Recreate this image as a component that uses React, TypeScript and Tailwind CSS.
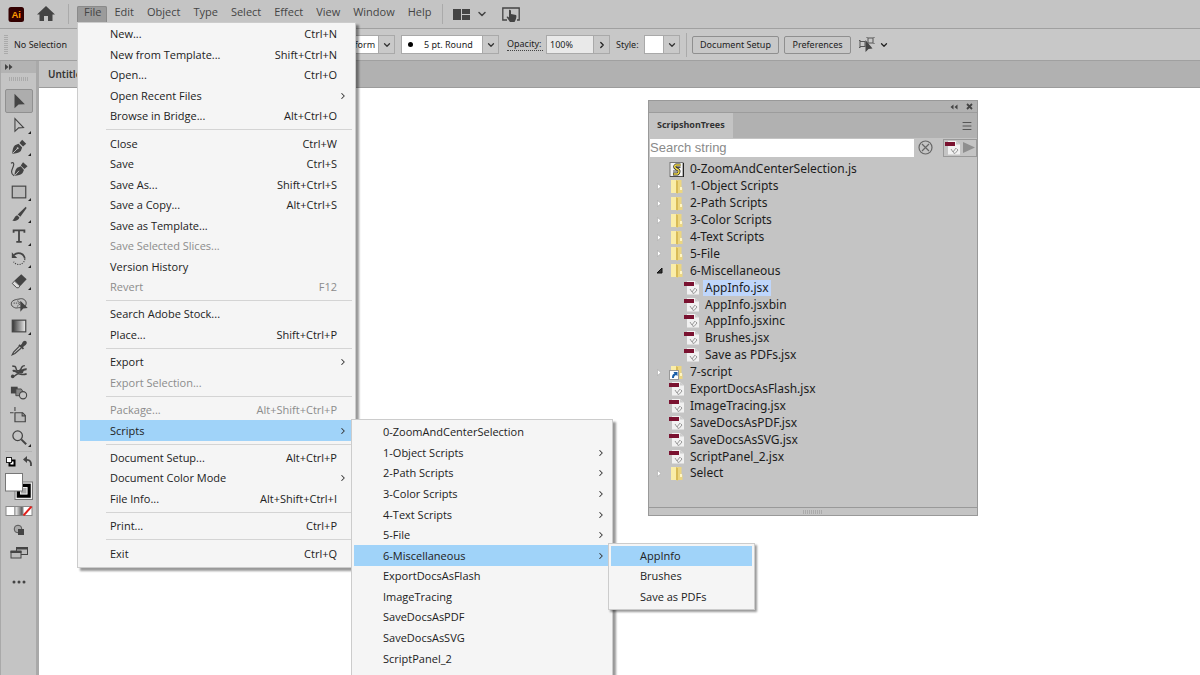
import React from 'react';
import { ChevronDown, ChevronRight, Menu as MenuIcon } from 'lucide-react';
import clsx from 'clsx';

interface MenuEntry {
  label: string;
  shortcut?: string;
  submenu?: boolean;
  disabled?: boolean;
  active?: boolean;
}

interface TreeNode {
  name: string;
  icon: 'folder' | 'shortcut' | 'jsx' | 'js';
  child?: boolean;
  open?: boolean;
  selected?: boolean;
}

const menuNames = ['File', 'Edit', 'Object', 'Type', 'Select', 'Effect', 'View', 'Window', 'Help'];

// null draws a separator
const fileMenu: (MenuEntry | null)[] = [
  { label: 'New...', shortcut: 'Ctrl+N' },
  { label: 'New from Template...', shortcut: 'Shift+Ctrl+N' },
  { label: 'Open...', shortcut: 'Ctrl+O' },
  { label: 'Open Recent Files', submenu: true },
  { label: 'Browse in Bridge...', shortcut: 'Alt+Ctrl+O' },
  null,
  { label: 'Close', shortcut: 'Ctrl+W' },
  { label: 'Save', shortcut: 'Ctrl+S' },
  { label: 'Save As...', shortcut: 'Shift+Ctrl+S' },
  { label: 'Save a Copy...', shortcut: 'Alt+Ctrl+S' },
  { label: 'Save as Template...' },
  { label: 'Save Selected Slices...', disabled: true },
  { label: 'Version History' },
  { label: 'Revert', shortcut: 'F12', disabled: true },
  null,
  { label: 'Search Adobe Stock...' },
  { label: 'Place...', shortcut: 'Shift+Ctrl+P' },
  null,
  { label: 'Export', submenu: true },
  { label: 'Export Selection...', disabled: true },
  null,
  { label: 'Package...', shortcut: 'Alt+Shift+Ctrl+P', disabled: true },
  { label: 'Scripts', submenu: true, active: true },
  null,
  { label: 'Document Setup...', shortcut: 'Alt+Ctrl+P' },
  { label: 'Document Color Mode', submenu: true },
  { label: 'File Info...', shortcut: 'Alt+Shift+Ctrl+I' },
  null,
  { label: 'Print...', shortcut: 'Ctrl+P' },
  null,
  { label: 'Exit', shortcut: 'Ctrl+Q' },
];

const scriptsMenu: MenuEntry[] = [
  { label: '0-ZoomAndCenterSelection' },
  { label: '1-Object Scripts', submenu: true },
  { label: '2-Path Scripts', submenu: true },
  { label: '3-Color Scripts', submenu: true },
  { label: '4-Text Scripts', submenu: true },
  { label: '5-File', submenu: true },
  { label: '6-Miscellaneous', submenu: true, active: true },
  { label: 'ExportDocsAsFlash' },
  { label: 'ImageTracing' },
  { label: 'SaveDocsAsPDF' },
  { label: 'SaveDocsAsSVG' },
  { label: 'ScriptPanel_2' },
];

const miscMenu: MenuEntry[] = [
  { label: 'AppInfo', active: true },
  { label: 'Brushes' },
  { label: 'Save as PDFs' },
];

const tree: TreeNode[] = [
  { name: '0-ZoomAndCenterSelection.js', icon: 'js' },
  { name: '1-Object Scripts', icon: 'folder' },
  { name: '2-Path Scripts', icon: 'folder' },
  { name: '3-Color Scripts', icon: 'folder' },
  { name: '4-Text Scripts', icon: 'folder' },
  { name: '5-File', icon: 'folder' },
  { name: '6-Miscellaneous', icon: 'folder', open: true },
  { name: 'AppInfo.jsx', icon: 'jsx', child: true, selected: true },
  { name: 'AppInfo.jsxbin', icon: 'jsx', child: true },
  { name: 'AppInfo.jsxinc', icon: 'jsx', child: true },
  { name: 'Brushes.jsx', icon: 'jsx', child: true },
  { name: 'Save as PDFs.jsx', icon: 'jsx', child: true },
  { name: '7-script', icon: 'shortcut' },
  { name: 'ExportDocsAsFlash.jsx', icon: 'jsx' },
  { name: 'ImageTracing.jsx', icon: 'jsx' },
  { name: 'SaveDocsAsPDF.jsx', icon: 'jsx' },
  { name: 'SaveDocsAsSVG.jsx', icon: 'jsx' },
  { name: 'ScriptPanel_2.jsx', icon: 'jsx' },
  { name: 'Select', icon: 'folder' },
];

const tools: { name: string; flyout?: boolean; art: React.ReactNode }[] = [
  { name: 'Selection', art: <path d="M5 2v16l4.500-4 7 -.5z" fill="#444" /> },
  {
    name: 'Direct Selection',
    flyout: true,
    art: <path d="M5.500 3v14l4-3.800 5.500-.4z" fill="none" stroke="#444" strokeWidth="1.200" />,
  },
  {
    name: 'Pen',
    flyout: true,
    art: (
      <>
        <path d="M2.500 17.500c0-4 1-7.500 3-9.500l4-1.500 4 4-1.500 4c-2 2-5.500 3-9.500 3z" fill="#444" />
        <path d="M10.500 5.500l3-3.500 4.500 4.500-3.500 3z" fill="#444" />
        <path d="M3 17l5-5" stroke="#c4c4c4" />
        <circle cx="8.500" cy="11.500" r="1.100" fill="#c4c4c4" />
      </>
    ),
  },
  {
    name: 'Curvature',
    art: (
      <>
        <path d="M5 17.500c0-4 1-7 3-9l4-1.500 3.500 4-1.500 3.500c-2 2-5 3-9 3z" fill="#444" />
        <path d="M12 6l2.500-3.500 5 4.500-3.500 3z" fill="#444" />
        <path d="M5.500 17l4.500-5" stroke="#c4c4c4" />
        <path d="M1 3.500c3-1.500 4 .5 2.500 4S0 15 4.500 17.500" fill="none" stroke="#444" strokeWidth="1.300" />
      </>
    ),
  },
  {
    name: 'Rectangle',
    flyout: true,
    art: <rect x="2.500" y="3.500" width="15" height="13" fill="#bbb" stroke="#444" strokeWidth="1.300" />,
  },
  {
    name: 'Paintbrush',
    flyout: true,
    art: (
      <>
        <path d="M17.500 2l1 1.200-7 9.800-3-2.500z" fill="#444" />
        <path d="M8 11.500l2.500 2.500c-1 3.500-4.500 4-8 3.500 2-1 2.500-5 5.500-6z" fill="#444" />
      </>
    ),
  },
  {
    name: 'Type',
    flyout: true,
    art: <path d="M4 6.500V3.800h12v2.700M10 4v12.500M7 16.500h6" fill="none" stroke="#444" strokeWidth="2" />,
  },
  {
    name: 'Rotate',
    flyout: true,
    art: (
      <>
        <path d="M4.500 5.500c4-4 11-2 12 4" fill="none" stroke="#444" strokeWidth="1.900" />
        <path d="M2 2.500v6.500h6z" fill="#444" />
        <path d="M16.500 10a6.800 6.800 0 0 1-12.500 3" fill="none" stroke="#444" strokeWidth="1.300" strokeDasharray="1.200 1.400" />
      </>
    ),
  },
  {
    name: 'Eraser',
    flyout: true,
    art: (
      <>
        <path d="M12.500 2.500l6 5.500-7 7.500-6.500-6z" fill="#444" />
        <path d="M5 10l-2.500 2.800 5 4.700h2l1.500-2z" fill="#ddd" stroke="#444" />
      </>
    ),
  },
  {
    name: 'Shape Builder',
    art: (
      <>
        <path d="M10 4.500c4-1.500 8 1 8 4.500s-2 5-6 5-5 1-7 0-4-2-3.500-5S6 5 10 4.500z" fill="#c0c0c0" stroke="#444" />
        <path d="M4 9h10M8 6.500c4 1 4 4 0 6" fill="none" stroke="#444" strokeDasharray="1.500 1" />
        <path d="M11.500 6.500v12l3.200-3.500 5-.5z" fill="#444" />
      </>
    ),
  },
  {
    name: 'Gradient',
    flyout: true,
    art: (
      <>
        <defs>
          <linearGradient id="toolGradient">
            <stop offset="0" stopColor="#333" />
            <stop offset="1" stopColor="#eee" />
          </linearGradient>
        </defs>
        <rect x="2.500" y="3.500" width="15" height="13" fill="url(#toolGradient)" stroke="#444" strokeWidth="1.300" />
      </>
    ),
  },
  {
    name: 'Eyedropper',
    art: (
      <>
        <path d="M11 7.500l2-2c1-3 3.500-4.500 5-3s.5 4-2.500 5.500l-2 2z" fill="#444" />
        <path d="M10 6.500l5 4.500" stroke="#444" strokeWidth="2" />
        <path d="M10.500 8L4 14.500l-1.500 3 3-1.500L12.500 10" fill="none" stroke="#444" strokeWidth="1.300" />
      </>
    ),
  },
  {
    name: 'Puppet Warp',
    art: (
      <>
        <path d="M2.500 4.500l3 .5c2 1 .5 3.500 2.500 4.500s4-1 4.500-2.500 2-3 4-3" fill="none" stroke="#444" strokeWidth="1.600" />
        <path d="M3 10c3-1 4 1.500 6.500 1.500S14 7.500 18.500 8" fill="none" stroke="#444" strokeWidth="2.200" />
        <path d="M3 16c3.500 0 3.500-3 6.500-3s4 2.500 9 0" fill="none" stroke="#444" strokeWidth="1.700" />
        <circle cx="3" cy="16" r="2" fill="#444" />
        <circle cx="12.500" cy="10.500" r="2.400" fill="#444" />
      </>
    ),
  },
  {
    name: 'Blend',
    art: (
      <>
        <rect x="1" y="3" width="7.500" height="7.500" fill="#444" />
        <path d="M6.500 5.500h6l2 3-2 4.500h-6z" fill="#888" stroke="#444" />
        <circle cx="14.500" cy="12.500" r="4" fill="#c4c4c4" stroke="#444" strokeWidth="1.200" />
      </>
    ),
  },
  {
    name: 'Artboard',
    art: (
      <>
        <path d="M5.500 7.500h8.500l3 3v7h-11.500z" fill="#bbb" stroke="#444" strokeWidth="1.300" />
        <path d="M13.500 7.500v3.500H17M5.500 1v4.500M0 7.500h4" fill="none" stroke="#444" strokeWidth="1.200" />
      </>
    ),
  },
  {
    name: 'Zoom',
    flyout: true,
    art: (
      <>
        <circle cx="8.500" cy="7.500" r="5.300" fill="none" stroke="#444" strokeWidth="1.400" />
        <path d="M12.500 11.500l5.500 5.500" stroke="#444" strokeWidth="2.200" />
      </>
    ),
  },
];

function MenuItem({ entry, inset }: { entry: MenuEntry; inset: string }) {
  return (
    <button
      type="button"
      role="menuitem"
      disabled={entry.disabled}
      className={clsx(
        'flex min-h-0 flex-[3] items-center pr-2 text-left leading-4 whitespace-nowrap',
        inset,
        entry.active && 'bg-[#a0d3f9]',
        entry.disabled ? 'text-[#8c8c8c]' : 'text-[#222]',
      )}
    >
      <span className="flex-1">{entry.label}</span>
      {entry.shortcut && <span className="pr-[7px]">{entry.shortcut}</span>}
      {entry.submenu && <ChevronRight className="-mr-1 h-2.5 w-2.5 text-[#333]" strokeWidth={2.5} />}
    </button>
  );
}

interface SelectFieldProps {
  label: string;
  value: string;
  className: string;
  dot?: boolean;
}

function SelectField({ label, value, className, dot }: SelectFieldProps) {
  return (
    <div className={clsx('relative h-[19px] overflow-hidden border border-[#a9a9a9]', className)}>
      <select
        aria-label={label}
        className={clsx('h-full w-full appearance-none bg-white text-[9px] leading-4 text-[#222]', value && 'pr-4', dot ? 'pl-[22px]' : value && 'pl-[25px]')}
      >
        <option>{value}</option>
      </select>
      {dot && <div className="pointer-events-none absolute top-1.5 left-1.5 h-[5px] w-[5px] rounded-full bg-black" />}
      <div className="pointer-events-none absolute inset-y-0 right-0 flex w-4 items-center justify-center border-l border-[#a9a9a9] bg-[#c9c9c9]">
        <ChevronDown className="h-2.5 w-2.5 text-[#333]" strokeWidth={3} />
      </div>
    </div>
  );
}

function JsxIcon() {
  return (
    <svg width="16" height="14" viewBox="0 0 16 14">
      <path d="M3 0h8l4 3.500V13.500H3z" fill="#f1f1f1" />
      <path d="M11 0v3.500h4z" fill="#ccc" />
      <rect x="0" y="1" width="10" height="4" fill="#7a1230" />
      <path d="M6 8l2 3 3-4M8 11.500l2 1 3-3.500-1.500-1.500" fill="none" stroke="#999" />
    </svg>
  );
}

function NodeIcon({ icon }: { icon: TreeNode['icon'] }) {
  if (icon === 'jsx') return <JsxIcon />;
  if (icon === 'js') {
    return (
      <svg width="16" height="15" viewBox="0 0 16 15">
        <rect x="1" y=".5" width="13" height="14" fill="#f4f4f4" stroke="#777" />
        <path d="M14.500 1v14H1" fill="none" stroke="#222" />
        <path d="M11.500 3H7c-2 1-1.500 2.500 0 3.500l2.500 1.500c1 1 .5 3-1 4H4" fill="none" stroke="#222" strokeWidth="3" />
        <path d="M11.500 3H7c-2 1-1.500 2.500 0 3.500l2.500 1.500c1 1 .5 3-1 4H4.500" fill="none" stroke="#f5dc4a" strokeWidth="1.500" />
        <path d="M7.500 5.500h4M4 9h4" stroke="#222" strokeWidth=".8" />
      </svg>
    );
  }
  return (
    <svg width="16" height="15" viewBox="0 0 16 15">
      <path d="M7 1h5.500v7l1 1v5H7z" fill="#ecd680" />
      <path d="M2 1h5l2 1v12.500L7 14H2z" fill="#faeda8" />
      <path d="M7 1l2 1v12.500L7 14z" fill="#d8bb58" />
      <rect x="11" y="8" width="2" height="3" fill="#fff6c4" />
      {icon === 'shortcut' && (
        <>
          <rect x=".5" y="5.500" width="9" height="9" fill="#fff" stroke="#999" />
          <path d="M3 13c0-3 1-4 2.500-4.500L4.500 7H8.500v4L7 10C5.500 10.500 5 11.500 5 13z" fill="#1b5fa8" />
        </>
      )}
    </svg>
  );
}

function Toolbar() {
  return (
    <aside className="flex w-[39px] shrink-0 flex-col border-r-[3px] border-l border-[#a9a9a9] bg-[#c4c4c4]">
      <div className="flex h-3 items-center bg-[#b3b3b3] pl-1">
        <svg width="8" height="6" viewBox="0 0 8 6">
          <path d="M0 0l3.500 3L0 6zM4 0l3.500 3L4 6z" fill="#444" />
        </svg>
      </div>
      <div className="mx-auto mt-1 mb-2 h-1 w-5 bg-[repeating-linear-gradient(90deg,#aaa_0_1px,transparent_1px_2px)]" />
      <div className="flex h-[360px] flex-col pl-1">
        {tools.map((tool, i) => (
          <button
            key={tool.name}
            type="button"
            aria-label={`${tool.name} Tool`}
            className={clsx(
              'relative flex w-7 flex-1 items-center justify-center rounded-xs',
              i === 0 && 'border border-[#909090] bg-[#adadad]',
            )}
          >
            <svg width="18" height="18" viewBox="0 0 20 20">{tool.art}</svg>
            {tool.flyout && (
              <svg className="absolute right-0.5 bottom-0.5" width="3" height="3" viewBox="0 0 3 3">
                <path d="M3 0v3H0z" fill="#222" />
              </svg>
            )}
          </button>
        ))}
      </div>
      <div className="mx-1 mt-0.5 border-t border-[#b3b3b3]" />
      <svg className="mt-1 ml-1" width="28" height="44" viewBox="0 0 28 44">
        <rect x="4.500" y="4.500" width="5" height="5" fill="#fff" stroke="#000" strokeWidth="2" />
        <rect x="1.500" y="1.500" width="5" height="5" fill="#fff" stroke="#222" />
        <path d="M21 4c4-.5 5.500 2 5 6" fill="none" stroke="#444" strokeWidth="1.800" />
        <path d="M22 0v7l-4-3.500z" fill="#444" />
        <rect x="10" y="26" width="17.500" height="17.500" fill="#eee" stroke="#777" />
        <rect x="13.500" y="29.500" width="10.500" height="10.500" fill="#c4c4c4" stroke="#000" strokeWidth="3.500" />
        <rect x="15.500" y="31.500" width="6.500" height="6.500" fill="#aaa" stroke="#eee" />
        <rect x=".5" y="17.500" width="17" height="17.500" fill="#fff" stroke="#777" />
      </svg>
      <svg className="mt-1.5 ml-1" width="28" height="10" viewBox="0 0 28 10">
        <defs>
          <linearGradient id="swatchGradient">
            <stop offset="0" stopColor="#fff" />
            <stop offset="1" stopColor="#444" />
          </linearGradient>
        </defs>
        <rect x="1" y=".5" width="9" height="9" fill="#fff" stroke="#888" />
        <rect x="10" y=".5" width="8" height="9" fill="url(#swatchGradient)" stroke="#888" />
        <rect x="18" y=".5" width="9" height="9" fill="#fff" stroke="#888" />
        <path d="M18.500 9.500l8-9" stroke="#e0201b" strokeWidth="2" />
      </svg>
      <button type="button" aria-label="Drawing Mode" className="mt-2 flex h-4 w-9 justify-center">
        <svg width="12" height="12" viewBox="0 0 12 12">
          <circle cx="5" cy="5" r="3.800" fill="#aaa" stroke="#555" />
          <rect x="5" y="5" width="6" height="6" fill="#444" />
        </svg>
      </button>
      <button type="button" aria-label="Screen Mode" className="mt-1.5 flex h-4 w-9 justify-center">
        <svg width="18" height="14" viewBox="0 0 18 14">
          <rect x="6.500" y="1.500" width="11" height="7" fill="#bbb" stroke="#444" />
          <path d="M6 2.500h12" stroke="#444" strokeWidth="2" />
          <rect x="1" y="5" width="10" height="7" fill="#bbb" stroke="#444" />
          <path d="M.5 6h11" stroke="#444" strokeWidth="2" />
        </svg>
      </button>
      <button type="button" aria-label="Edit Toolbar" className="mt-3 flex h-4 w-9 items-center justify-center">
        <svg width="14" height="4" viewBox="0 0 14 4">
          <circle cx="2" cy="2" r="1.500" fill="#444" />
          <circle cx="7" cy="2" r="1.500" fill="#444" />
          <circle cx="12" cy="2" r="1.500" fill="#444" />
        </svg>
      </button>
    </aside>
  );
}

function ScriptPanel() {
  return (
    <section className="absolute top-3 left-[609px] w-[330px] border border-[#999] bg-[#c4c4c4]">
      <div className="flex h-3 items-center justify-end gap-2 border-b border-[#9c9c9c] bg-[#b1b1b1] pr-1">
        <svg width="8" height="6" viewBox="0 0 8 6">
          <path d="M3.500.5L.5 3l3 2.500zM7.500.5l-3 2.500 3 2.500z" fill="#444" />
        </svg>
        <svg width="7" height="7" viewBox="0 0 7 7">
          <path d="M1 1l5 5M6 1L1 6" stroke="#444" strokeWidth="1.800" />
        </svg>
      </div>
      <div className="flex h-[25px] items-center justify-between bg-[#b1b1b1] pr-1">
        <h2 className="flex h-full items-center bg-[#c4c4c4] px-2 pb-0.5 text-[9px] leading-3 font-bold text-[#333]">ScripshonTrees</h2>
        <button type="button" aria-label="Panel menu">
          <MenuIcon className="h-3 w-3 text-[#555]" strokeWidth={2} />
        </button>
      </div>
      <div className="flex h-[19px] items-center">
        <input
          type="text"
          aria-label="Search string"
          placeholder="Search string"
          className="ml-px h-[18px] min-w-0 flex-1 bg-white font-['Liberation_Sans',sans-serif] text-[13px] leading-4 placeholder:text-[#8a8a8a]"
        />
        <button type="button" aria-label="Clear" className="mx-1">
          <svg width="15" height="15" viewBox="0 0 15 15">
            <circle cx="7.500" cy="7.500" r="6.500" fill="none" stroke="#666" strokeWidth="1.200" />
            <path d="M4 4l7 7M11 4l-7 7" stroke="#666" strokeWidth="1.200" />
          </svg>
        </button>
        <button type="button" aria-label="Run script" className="ml-1.5 flex h-[18px] w-[34px] items-center gap-0.5 border border-[#999] pl-px">
          <JsxIcon />
          <svg width="12" height="11" viewBox="0 0 12 11">
            <path d="M0 0l12 5.500L0 11z" fill="#8f8f8f" />
          </svg>
        </button>
      </div>
      <ul className="mt-1 flex h-[321px] flex-col font-['Noto_Sans',sans-serif] text-[12px] leading-4 text-[#1c1c1c]">
        {tree.map((node) => (
          <li key={node.name} className={clsx('flex min-h-0 flex-1 items-center whitespace-nowrap', node.child ? 'pl-[22px]' : 'pl-[7px]')}>
            <span className="flex w-[13px] items-center">
              {(node.icon === 'folder' || node.icon === 'shortcut') && (
                <svg width="7" height="7" viewBox="0 0 7 7">
                  {node.open ? <path d="M6 1v5H1z" fill="#333" stroke="#111" /> : <path d="M1.500.5l3.500 3-3.500 3z" fill="#fff" stroke="#aaa" strokeWidth=".6" />}
                </svg>
              )}
            </span>
            <NodeIcon icon={node.icon} />
            <span className={clsx('ml-[3px] px-0.5', node.selected && 'bg-[#bfd6fb]')}>{node.name}</span>
          </li>
        ))}
      </ul>
      <div className="mt-[25px] flex h-2 items-center justify-center border-t border-[#999]">
        <div className="h-1 w-5 bg-[repeating-linear-gradient(90deg,#aaa_0_1px,transparent_1px_2px)]" />
      </div>
    </section>
  );
}

export default function App() {
  return (
    <div className="relative flex h-screen flex-col overflow-hidden bg-[#c4c4c4] font-['Noto_Sans',sans-serif] text-[11px]">
      <header className="flex h-7 shrink-0 items-center">
        <svg className="ml-2 shrink-0" width="17" height="15" viewBox="0 0 17 15">
          <rect x=".5" width="15.500" height="15" rx="2.500" fill="#330000" />
          <text x="8.200" y="11" textAnchor="middle" fontFamily="Liberation Sans, sans-serif" fontWeight="bold" fontSize="9.500" fill="#ff9a00">Ai</text>
        </svg>
        <button type="button" aria-label="Home" className="ml-3">
          <svg width="18" height="16" viewBox="0 0 18 16">
            <path d="M9 0l9 8.500h-2.500V15h-4.500v-5H7v5H2.500V8.500H0z" fill="#444" />
          </svg>
        </button>
        <div className="ml-[13px] h-5 w-px bg-[#aaa]" />
        <nav className="ml-2 flex self-end font-['Open_Sans',sans-serif] text-[#444]">
          {menuNames.map((name, i) => (
            <button
              key={name}
              type="button"
              className={clsx('h-[22px] pr-1.5 pb-2.5 pl-[7px] leading-3', i === 0 && 'rounded-t-xs bg-[#9b9b9b] shadow-[inset_0_0_0_1px_#8a8a8a]')}
            >
              {name}
            </button>
          ))}
        </nav>
        <div className="ml-1 h-5 w-px bg-[#aaa]" />
        <button type="button" aria-label="Arrange Documents" className="ml-2.5 flex items-center gap-1.5">
          <svg width="17" height="11" viewBox="0 0 17 11">
            <path d="M0 0h8v11H0zM9 0h8v5H9zM9 6h8v5H9z" fill="#444" />
          </svg>
          <ChevronDown className="h-3 w-3 text-[#444]" strokeWidth={3} />
        </button>
        <button type="button" aria-label="Touch Workspace" className="ml-3.5">
          <svg width="18" height="15" viewBox="0 0 18 15">
            <path d="M5 13H.8V1h16.400v12H15" fill="none" stroke="#444" strokeWidth="1.300" />
            <path d="M7 3c1.500-.5 2 .5 2 1.500V7l5 1c1 1 0 5-1.500 7H8L4.500 10c.5-1 1.500-.5 2.500.5z" fill="#444" />
          </svg>
        </button>
      </header>

      <div className="flex h-[33px] shrink-0 items-center border-t border-b border-[#a0a0a0] bg-[#c8c8c8] text-[9px] text-[#222]">
        <div className="ml-1 h-5 w-1 bg-[repeating-linear-gradient(180deg,#aaa_0_1px,transparent_1px_2px)]" />
        <span className="ml-1.5 w-[300px] leading-4">No Selection</span>
        <SelectField label="Width profile" value="Uniform" className="w-[81px]" />
        <SelectField label="Brush definition" value="5 pt. Round" dot className="ml-1.5 w-[98px]" />
        <label htmlFor="opacity" className="ml-2 w-9 border-b border-dotted border-[#444] leading-3">Opacity:</label>
        <input id="opacity" type="text" defaultValue="100%" className="ml-[3px] h-[19px] w-12 border border-[#a9a9a9] bg-[#e9e9e9] pl-[3px] leading-4" />
        <button type="button" aria-label="Opacity slider" className="flex h-[19px] w-4 items-center justify-center border border-l-0 border-[#a9a9a9]">
          <ChevronRight className="h-2.5 w-2.5" strokeWidth={3} />
        </button>
        <span className="ml-1.5 w-7 leading-4">Style:</span>
        <SelectField label="Style" value="" className="w-[36px]" />
        <div className="ml-1.5 h-6 w-px bg-[#aaa]" />
        <button type="button" className="ml-[5px] h-[18px] w-[87px] rounded-xs border border-[#8f8f8f] leading-4">Document Setup</button>
        <button type="button" className="ml-[5px] h-[18px] w-[67px] rounded-xs border border-[#8f8f8f] leading-4">Preferences</button>
        <button type="button" aria-label="Select Similar" className="ml-2 flex items-center gap-1">
          <svg width="16" height="15" viewBox="0 0 16 15">
            <rect x="1" y="4.500" width="5" height="5" fill="none" stroke="#555" />
            <rect x="9" y="1" width="5" height="5" fill="none" stroke="#555" />
            <path d="M0 3.500h1.500M0 10.500h1.500M8 0v1M15 0v1M15 7V6" stroke="#555" />
            <path d="M6.500 3v12l3-3 4-.5z" fill="#444" />
          </svg>
          <ChevronDown className="h-2.5 w-2.5" strokeWidth={3} />
        </button>
      </div>

      <div className="flex min-h-0 flex-1">
        <Toolbar />
        <div className="flex min-w-0 flex-1 flex-col">
          <div className="flex h-[27px] shrink-0 border-b border-[#9c9c9c] bg-[#b1b1b1]">
            <div className="flex w-40 items-center bg-[#c4c4c4] pl-[9px] text-[10px] leading-4 font-semibold text-[#333]">Untitled-1</div>
          </div>
          <main className="relative flex-1 bg-white">
            <ScriptPanel />
          </main>
        </div>
      </div>

      <div className="font-['Open_Sans',sans-serif]">
        <div role="menu" aria-label="File" className="absolute top-[22px] left-[77px] flex h-[546px] w-[279px] flex-col border border-[#ccc] bg-[#f5f5f5] pt-px pr-[3px] pb-[3px] pl-0.5 shadow-[3px_3px_2px_rgba(0,0,0,0.4)]">
          {fileMenu.map((entry, i) =>
            entry ? (
              <MenuItem key={entry.label} entry={entry} inset="pl-[30px]" />
            ) : (
              <div key={i} role="separator" className="ml-[26px] flex min-h-0 flex-1 items-center">
                <div className="h-px w-full bg-[#d4d4d4]" />
              </div>
            ),
          )}
        </div>

        <div role="menu" aria-label="Scripts" className="absolute top-[419px] left-[351px] w-[262px] border border-[#ccc] bg-[#f5f5f5] px-0.5 pt-0.5 pb-8 shadow-[3px_3px_2px_rgba(0,0,0,0.4)]">
          <div className="flex h-[247px] flex-col">
            {scriptsMenu.map((entry) => (
              <MenuItem key={entry.label} entry={entry} inset="pl-[29px]" />
            ))}
          </div>
        </div>

        <div role="menu" aria-label="6-Miscellaneous" className="absolute top-[543px] left-[608px] flex h-[67px] w-[147px] flex-col border border-[#ccc] bg-[#f5f5f5] p-0.5 shadow-[2px_2px_2px_rgba(0,0,0,0.4)]">
          {miscMenu.map((entry) => (
            <MenuItem key={entry.label} entry={entry} inset="pl-[29px]" />
          ))}
        </div>
      </div>
    </div>
  );
}
